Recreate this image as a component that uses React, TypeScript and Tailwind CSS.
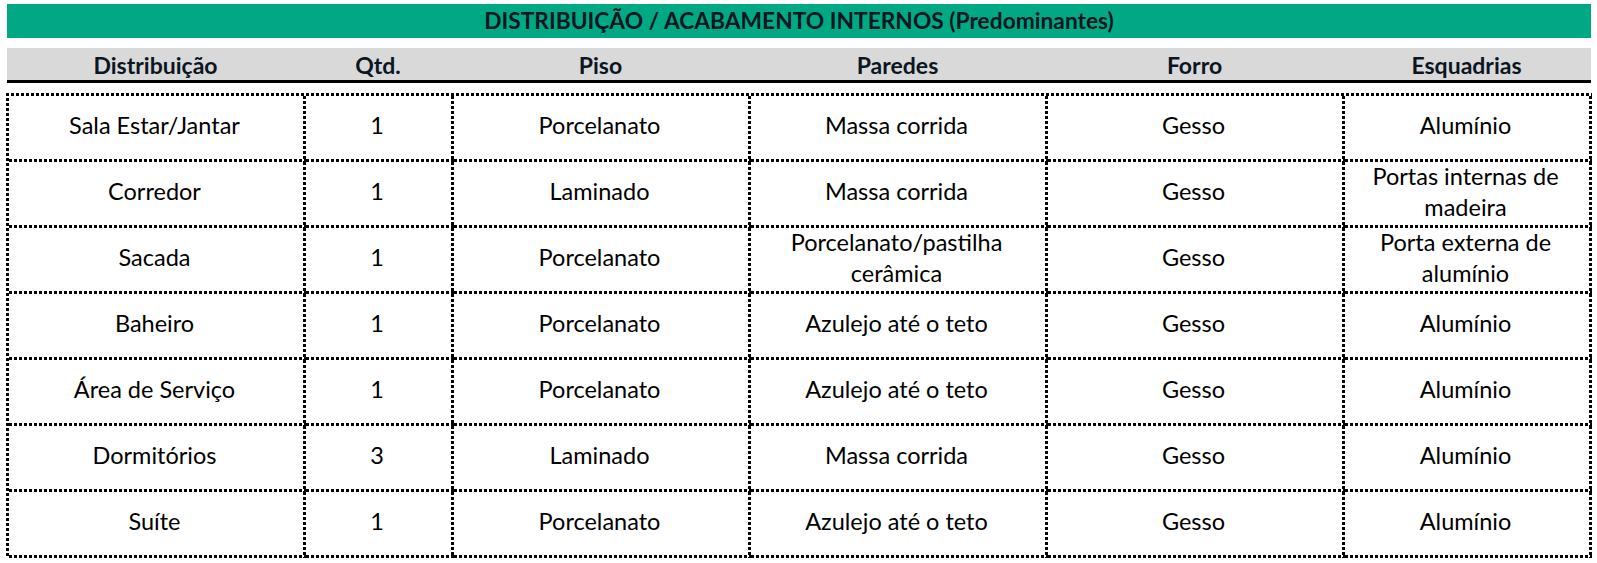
import React from 'react'

const cols = ['Distribuição', 'Qtd.', 'Piso', 'Paredes', 'Forro', 'Esquadrias']

const rows: string[][] = [
  ['Sala Estar/Jantar', '1', 'Porcelanato', 'Massa corrida', 'Gesso', 'Alumínio'],
  ['Corredor', '1', 'Laminado', 'Massa corrida', 'Gesso', 'Portas internas de madeira'],
  ['Sacada', '1', 'Porcelanato', 'Porcelanato/pastilha cerâmica', 'Gesso', 'Porta externa de alumínio'],
  ['Baheiro', '1', 'Porcelanato', 'Azulejo até o teto', 'Gesso', 'Alumínio'],
  ['Área de Serviço', '1', 'Porcelanato', 'Azulejo até o teto', 'Gesso', 'Alumínio'],
  ['Dormitórios', '3', 'Laminado', 'Massa corrida', 'Gesso', 'Alumínio'],
  ['Suíte', '1', 'Porcelanato', 'Azulejo até o teto', 'Gesso', 'Alumínio'],
]

const grid = 'grid grid-cols-[297px_148px_297px_297px_297px_247px]'

// excel-like dotted borders (square dots, dense) drawn on the right/bottom edge of each cell
const cellDots =
  '[background:repeating-linear-gradient(90deg,#000_0_3px,#0000_3px_5px)_left_bottom/100%_3px_no-repeat,repeating-linear-gradient(180deg,#000_0_3px,#0000_3px_5px)_right_top/3px_100%_no-repeat]'
const tableDots =
  '[background:repeating-linear-gradient(90deg,#000_0_3px,#0000_3px_5px)_left_top/100%_3px_no-repeat,repeating-linear-gradient(180deg,#000_0_3px,#0000_3px_5px)_left_top/3px_100%_no-repeat]'

export default function App() {
  return (
    <div className="bg-white w-[1597px] h-[563px] pt-[4px] pl-[6px] font-['Lato',sans-serif] text-black">
      <div className="w-[1585px]">
        <div className="h-[34px] ml-[1px] bg-[#00a984] flex items-center justify-center text-[22.75px] font-bold text-[#0b1622]">
          DISTRIBUIÇÃO / ACABAMENTO INTERNOS (Predominantes)
        </div>

        <div className={`${grid} mt-[10px] ml-[1px] h-[32px] bg-[#d9d9d9] border-b-[3px] border-black box-content`}>
          {cols.map((c) => (
            <div key={c} className="flex items-center justify-center text-[23px] font-bold text-[#0b1622]">
              {c}
            </div>
          ))}
        </div>

        <div className={`${grid} ${tableDots} mt-[10px] pl-[3px] pt-[3px] w-fit`}>
          {rows.map((r, i) =>
            r.map((cell, j) => (
              <div
                key={`${i}-${j}`}
                className={`${cellDots} h-[66px] pl-[5px] pr-[11px] pb-[7px] flex items-center justify-center text-center text-[23.5px] leading-[31px]`}
              >
                {cell}
              </div>
            ))
          )}
        </div>
      </div>
    </div>
  )
}
